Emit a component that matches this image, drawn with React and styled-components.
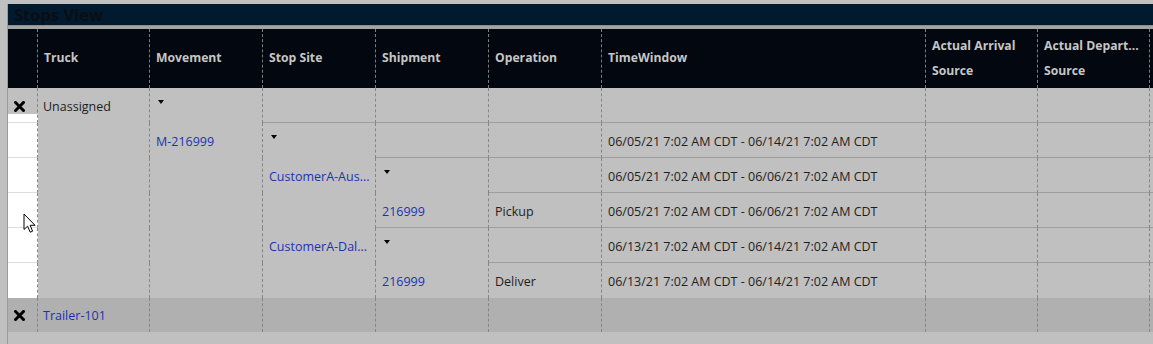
import styled, { createGlobalStyle, css } from "styled-components";

const GlobalStyle = createGlobalStyle`
  body {
    margin: 0;
    background: #c0c0c0;
    font-family: "Open Sans", "Liberation Sans", sans-serif;
  }
`;

const COLUMNS = "30px 112px 113px 113px 113px 113px 324px 112px 112px 1fr";

const Page = styled.div`
  position: relative;
  box-sizing: border-box;
  height: 344px;
  padding: 4px 0 0 7px;
  overflow: hidden;
`;

const Panel = styled.div`
  height: 340px;
  border-left: 1px solid #9c9c9c;
`;

const TitleBar = styled.div`
  height: 21px;
  line-height: 22px;
  padding-left: 6px;
  background: #011a2e;
  color: #0a0e14;
  font-size: 16.5px;
  font-weight: 700;
  overflow: hidden;
`;

const Band = styled.div`
  height: 3px;
  border-top: 1px solid #8e8e8e;
  background: #a4a4a4;
`;

const Grid = styled.div`
  display: grid;
  grid-template-columns: ${COLUMNS};
`;

const HeadCell = styled.div`
  box-sizing: border-box;
  height: 59px;
  padding: 0 0 2px 6px;
  display: flex;
  flex-direction: column;
  justify-content: center;
  background: #03070f;
  color: #c6c6c6;
  font-size: 12.2px;
  font-weight: 700;
  line-height: 25px;
  white-space: nowrap;
  overflow: hidden;
  border-right: ${(p) => (p.$last ? "none" : "1px dashed #7c7c7c")};
`;

const tones = {
  plain: css`
    background: transparent;
  `,
  white: css`
    background: #ffffff;
  `,
  lead: css`
    background: linear-gradient(to bottom, transparent 26px, #ffffff 26px);
  `,
  trailer: css`
    background: #b0b0b0;
  `,
};

const Cell = styled.div`
  box-sizing: border-box;
  height: ${(p) => (p.$short ? "34px" : "35px")};
  padding: ${(p) => (p.$short ? "0" : "2px")} 4px 0 ${(p) => (p.$tight ? "5px" : "6px")};
  display: flex;
  align-items: center;
  position: relative;
  font-size: 12.5px;
  color: #1e1e1e;
  white-space: nowrap;
  overflow: hidden;
  border-right: ${(p) => (p.$last ? "none" : "1px dashed #858585")};
  border-bottom: ${(p) =>
    p.$line === "light"
      ? "1px solid #dcdcdc"
      : p.$line
      ? "1px solid #9e9e9e"
      : "none"};
  ${(p) => tones[p.$tone || "plain"]}
`;

const Link = styled.span`
  color: #1b33b0;
`;

const Caret = styled.span`
  position: absolute;
  top: 12px;
  left: 8px;
  width: 0;
  height: 0;
  border-left: 3.5px solid transparent;
  border-right: 3.5px solid transparent;
  border-top: 4px solid #000;
`;

const Cursor = styled.svg`
  position: absolute;
  left: 23px;
  top: 213px;
`;

function CloseIcon() {
  return (
    <svg width="11" height="11" viewBox="0 0 11 11">
      <path d="M1.5 1.5 L9.5 9.5 M9.5 1.5 L1.5 9.5" stroke="#000" strokeWidth="3" strokeLinecap="square" />
    </svg>
  );
}

const headers = [
  [""],
  ["Truck"],
  ["Movement"],
  ["Stop Site"],
  ["Shipment"],
  ["Operation"],
  ["TimeWindow"],
  ["Actual Arrival", "Source"],
  ["Actual Depart...", "Source"],
  [""],
];

const t1 = "06/05/21 7:02 AM CDT - 06/14/21 7:02 AM CDT";
const t2 = "06/05/21 7:02 AM CDT - 06/06/21 7:02 AM CDT";
const t3 = "06/13/21 7:02 AM CDT - 06/14/21 7:02 AM CDT";

// each row: cells for columns 1..6, and the column where the row line starts
const rows = [
  { lineFrom: 3, cells: ["Unassigned", { caret: true }, "", "", "", ""] },
  { lineFrom: 4, cells: ["", { link: "M-216999" }, { caret: true }, "", "", t1] },
  { lineFrom: 5, cells: ["", "", { link: "CustomerA-Aus..." }, { caret: true }, "", t2] },
  { lineFrom: 4, cells: ["", "", "", { link: "216999" }, "Pickup", t2] },
  { lineFrom: 5, cells: ["", "", { link: "CustomerA-Dal..." }, { caret: true }, "", t3] },
  { lineFrom: 10, cells: ["", "", "", { link: "216999" }, "Deliver", t3] },
];

function Content({ value }) {
  if (!value) return null;
  if (typeof value === "string") return value;
  if (value.caret) return <Caret />;
  return <Link>{value.link}</Link>;
}

export default function App() {
  return (
    <Page>
      <GlobalStyle />
      <Panel>
        <TitleBar>Stops View</TitleBar>
        <Band />
        <Grid>
          {headers.map((lines, i) => (
            <HeadCell key={i} $last={i === headers.length - 1}>
              {lines.map((l, j) => (
                <span key={j}>{l}</span>
              ))}
            </HeadCell>
          ))}

          {rows.map((row, r) => (
            <Row key={r} index={r} row={row} />
          ))}

          <Cell $short $tone="trailer">
            <CloseIcon />
          </Cell>
          <Cell $short $tight $tone="trailer">
            <Link>Trailer-101</Link>
          </Cell>
          {Array.from({ length: 8 }, (_, i) => (
            <Cell key={i} $short $tone="trailer" $last={i === 7} />
          ))}
        </Grid>
      </Panel>
      <Cursor width="14" height="22" viewBox="0 0 14 22">
        <path
          d="M1 1 L1 16.5 L4.6 13.2 L7.2 19.2 L9.6 18.2 L7.1 12.3 L12 12.3 Z"
          fill="#fff"
          stroke="#000"
          strokeWidth="1"
          strokeLinejoin="miter"
        />
      </Cursor>
    </Page>
  );
}

function Row({ index, row }) {
  const first = index === 0;
  const lastRow = index === rows.length - 1;
  return (
    <>
      <Cell $tone={first ? "lead" : "white"} $line={lastRow ? false : "light"}>
        {first && <CloseIcon />}
      </Cell>
      {row.cells.map((c, i) => (
        <Cell key={i} $tight={i === 0} $line={i + 1 >= row.lineFrom}>
          <Content value={c} />
        </Cell>
      ))}
      <Cell $line={7 >= row.lineFrom} />
      <Cell $line={8 >= row.lineFrom} />
      <Cell $line={9 >= row.lineFrom} $last />
    </>
  );
}
